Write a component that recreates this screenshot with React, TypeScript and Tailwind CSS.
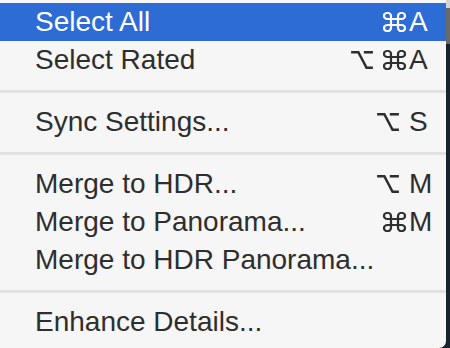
import React from "react";

const Cmd = ({ color }: { color: string }) => (
  <svg width="23" height="20" viewBox="2.2 2.2 19.6 19.6" preserveAspectRatio="none" fill="none" stroke={color} strokeWidth="1.9" strokeLinecap="round" strokeLinejoin="round">
    <path d="M15 6v12a3 3 0 1 0 3-3H6a3 3 0 1 0 3 3V6a3 3 0 1 0-3 3h12a3 3 0 1 0-3-3" />
  </svg>
);

const Opt = ({ color }: { color: string }) => (
  <svg width="22" height="20" viewBox="0 0 24 22" fill="none" stroke={color} strokeWidth="2.8" strokeLinecap="butt" strokeLinejoin="miter">
    <path d="M0 2.5h8l9 17h7" />
    <path d="M14 2.5h10" />
  </svg>
);

type Item = { label: string; mods?: ("opt" | "cmd")[]; keyc?: string; active?: boolean };

const Row = ({ label, mods = [], keyc, active }: Item) => {
  const color = active ? "#ffffff" : "#2e2e2e";
  const onlyOpt = mods.length === 1 && mods[0] === "opt";
  return (
    <div
      className={`flex h-[38px] items-center pl-[35px] ${active ? "bg-[#2d6bd5] text-white" : "text-[#2e2e2e]"}`}
    >
      <div className="flex-1 whitespace-nowrap">{label}</div>
      {keyc && (
        <div className="flex items-center">
          <div className={`flex items-center justify-end gap-[10px] ${onlyOpt ? "pr-[7px]" : ""}`}>
            {mods.map((m, i) => (m === "cmd" ? <Cmd key={i} color={color} /> : <Opt key={i} color={color} />))}
          </div>
          <div className="ml-[3px] w-[37px]">{keyc}</div>
        </div>
      )}
    </div>
  );
};

const Sep = () => (
  <div className="flex h-[24px] flex-col pt-[11px]">
    <div className="h-[3px] bg-[#e1e1e1]" />
  </div>
);

export default function App() {
  return (
    <div className="flex h-[348px] w-[450px] overflow-hidden bg-[#18232d]">
      <div
        className="flex h-[348px] w-[446px] flex-col rounded-br-[7px] bg-[#f6f6f6] pt-[3px] text-[28px] leading-none"
        style={{ fontFamily: '"Liberation Sans", Arial, sans-serif' }}
      >
        <Row label="Select All" mods={["cmd"]} keyc="A" active />
        <Row label="Select Rated" mods={["opt", "cmd"]} keyc="A" />
        <Sep />
        <Row label="Sync Settings..." mods={["opt"]} keyc="S" />
        <Sep />
        <Row label="Merge to HDR..." mods={["opt"]} keyc="M" />
        <Row label="Merge to Panorama..." mods={["cmd"]} keyc="M" />
        <Row label="Merge to HDR Panorama..." />
        <Sep />
        <Row label="Enhance Details..." />
      </div>
      <div className="flex flex-1 flex-col">
        <div className="h-[8px] bg-[#d4d4d4]" />
        <div className="h-[36px] bg-[#6a6a6a]" />
        <div className="flex-1 bg-[#18232d]" />
      </div>
    </div>
  );
}
